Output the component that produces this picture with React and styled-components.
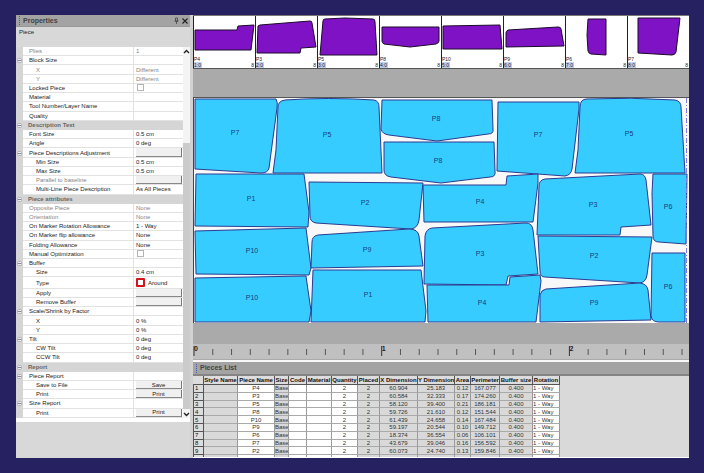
import React from "react";
import styled, { createGlobalStyle, css } from "styled-components";

const Global = createGlobalStyle`
  * { box-sizing: border-box; }
  body { margin: 0; background: #262262; font-family: "Liberation Sans", Arial, sans-serif; font-size: 6px; color: #222; }
  button, input { font: inherit; margin: 0; padding: 0; }
`;

const Frame = styled.main`
  display: grid;
  grid-template-columns: 177fr 496fr;
  grid-template-rows: minmax(0, 1fr);
  height: 100vh;
  padding: 15px 15px 15px 16px;
`;

/* Properties panel */
const Sidebar = styled.aside`
  display: flex;
  flex-direction: column;
  min-width: 0;
  background: #d8d8d8;
  border-right: 3px solid #d2d2d2;
`;
const TitleBar = styled.header`
  display: flex;
  align-items: center;
  height: ${(p) => (p.$ruled ? 14 : 12)}px;
  padding: 0 2px 0 3px;
  gap: 3px;
  background: #a3a3a3;
  color: #444;
  border-bottom: ${(p) => (p.$ruled ? "2px solid #858585" : "1px solid #989898")};
`;
const Grip = styled.span`
  height: 9px;
  border-left: 1px dotted #3d5fae;
`;
const Title = styled.h2`
  flex: 1;
  margin: 0;
  font-size: 7px;
  line-height: 8px;
  font-weight: bold;
`;
const IconButton = styled.button`
  display: flex;
  border: 0;
  background: none;
  color: #222;
`;
const Subject = styled.p`
  height: 20px;
  margin: 0;
  padding: 1px 3px;
  font-size: 6px;
  line-height: 8px;
`;
const GridArea = styled.div`
  display: flex;
  flex: 1;
  min-height: 0;
  padding-bottom: 4px;
  background: #fff;
`;
const PropertyList = styled.div`
  display: flex;
  flex: 1;
  flex-direction: column;
  min-width: 0;
`;
const PropertyRow = styled.div`
  display: grid;
  grid-template-columns: 7px 111fr 49fr;
  flex: ${(p) => (p.$tall ? 11 : 9)} 1 0;
  min-height: 0;
  align-items: stretch;
  line-height: 8px;
  color: ${(p) => (p.$dim ? "#858585" : "#222")};
  ${(p) => p.$section && css`
    background: #d5d5d5;
    color: #666;
    font-weight: bold;
  `}
`;
const Gutter = styled.div`
  display: flex;
  align-items: center;
  justify-content: center;
  background: #d5d5d5;
`;
const Toggle = styled.button`
  display: flex;
  border: 0;
  background: none;
`;
const Name = styled.label`
  display: flex;
  align-items: center;
  min-width: 0;
  padding-left: ${(p) => (p.$level === 2 ? 13 : p.$level === 1 ? 6 : 5)}px;
  white-space: nowrap;
  border-bottom: 1px solid ${(p) => (p.$level ? "#e2e2e2" : "#d5d5d5")};
  ${(p) => p.$level > 0 && "border-right: 1px solid #e2e2e2;"}
`;
const Value = styled.div`
  display: flex;
  align-items: center;
  gap: 3px;
  min-width: 0;
  padding-left: 2px;
  white-space: nowrap;
  border-bottom: 1px solid ${(p) => (p.$section ? "#d5d5d5" : "#e2e2e2")};
`;
const PushButton = styled.button`
  flex: 1;
  align-self: stretch;
  margin-right: 1px;
  border: 0;
  border-right: 1px solid #777;
  border-bottom: 1px solid #888;
  background: #f0f0f0;
  color: #222;
  line-height: 6px;
`;
const Check = styled.input`
  appearance: none;
  width: 7px;
  height: 7px;
  margin-left: 1px;
  border: 1px solid #b5b5b5;
  background: #fff;
`;
const Swatch = styled.span`
  width: 9px;
  height: 9px;
  border: 2px solid #d3141b;
  border-radius: 1px;
  background: #fff;
`;
const Scrollbar = styled.div`
  display: flex;
  flex-direction: column;
  align-items: center;
  width: 7px;
  background: #f4f4f4;
`;
const Thumb = styled.div`
  flex: 270;
  width: 100%;
  background: #cbcbcb;
`;
const Track = styled.div`
  flex: 88;
`;
const Footer = styled.div`
  height: 36px;
  background: #d8d8d8;
`;

/* Workspace */
const Workspace = styled.section`
  display: flex;
  flex-direction: column;
  min-width: 0;
  min-height: 0;
  background: #aaa;
`;
const Strip = styled.div`
  display: grid;
  grid-template-columns: repeat(8, 1fr);
  background: #fff;
  border-top: 1px solid #777;
  border-bottom: 1px solid #555;
`;
const Thumbnail = styled.figure`
  display: flex;
  flex-direction: column;
  min-width: 0;
  margin: 0;
  border-left: 1px solid #222;
  font-size: 5px;
  line-height: 6px;
  color: #222;
  svg { display: block; width: 100%; }
`;
const Counts = styled.figcaption`
  display: flex;
  flex-wrap: wrap;
  justify-content: space-between;
`;
const PieceTag = styled.span`
  width: 100%;
`;
const Count = styled.span`
  padding-right: 1px;
  background: ${(p) => (p.$marked ? "#c3cfee" : "#fff")};
`;
const Marker = styled.div`
  margin: 28px 0 21px;
  background: #f8f8f8;
  svg { display: block; width: 100%; }
`;
const Ruler = styled.div`
  background: #c0c0c0;
  border-bottom: 1px solid #aaa;
  svg { display: block; width: 100%; }
`;
const Divider = styled.div`
  height: 2px;
  background: #f8f8f8;
`;
const ListArea = styled.div`
  flex: 1;
  min-height: 0;
  overflow: hidden;
  background: #d9d9d9;
  border-bottom: 1px solid #fff;
`;
const Table = styled.table`
  width: 74%;
  height: 87px;
  table-layout: fixed;
  border-collapse: separate;
  border-spacing: 0;
  font-size: 6px;
  line-height: 6px;
`;
const Head = styled.th`
  height: 9px;
  padding: 0;
  overflow: hidden;
  white-space: nowrap;
  background: #ddd;
  color: #111;
  border-right: 1px solid #555;
  border-bottom: 1px solid #555;
`;
const Cell = styled.td`
  padding: 0;
  overflow: hidden;
  white-space: nowrap;
  text-align: ${(p) => (p.$left ? "left" : "center")};
  background: ${(p) => (p.$open ? "#fff" : "#d9d9d9")};
  color: #333;
  border-right: 1px solid #999;
  border-bottom: 1px solid #aaa;
`;
const RowHead = styled(Head)`
  height: auto;
  padding-left: 1px;
  text-align: left;
  font-weight: normal;
  border-left: 1px solid #555;
`;

const S = (name) => ({ name, level: 0, toggle: true });
const G = (name, value = "") => ({ name, value, level: 1, toggle: true });
const R = (name, value = "", extra) => ({ name, value, level: 1, ...extra });
const C = (name, value = "", extra) => ({ name, value, level: 2, ...extra });
const dim = { dim: true };
const button = { kind: "button" };
const check = { kind: "check" };

const properties = [
  R("Plies", "1", dim),
  G("Block Size"),
  C("X", "Different", dim),
  C("Y", "Different", dim),
  R("Locked Piece", "", check),
  R("Material"),
  R("Tool Number/Layer Name"),
  R("Quality"),
  S("Description Text"),
  R("Font Size", "0.5 cm"),
  R("Angle", "0 deg"),
  { ...G("Piece Descriptions Adjustment"), kind: "button" },
  C("Min Size", "0.5 cm"),
  C("Max Size", "0.5 cm"),
  C("Parallel to baseline", "", { dim: true, kind: "button" }),
  C("Multi-Line Piece Description", "As All Pieces"),
  S("Piece attributes"),
  R("Opposite Piece", "None", dim),
  R("Orientation", "None", dim),
  R("On Marker Rotation Allowance", "1 - Way"),
  R("On Marker flip allowance", "None"),
  R("Folding Allowance", "None"),
  R("Manual Optimization", "", check),
  G("Buffer"),
  C("Size", "0.4 cm"),
  C("Type", "Around", { kind: "swatch" }),
  C("Apply", "", button),
  C("Remove Buffer", "", button),
  G("Scale/Shrink by Factor"),
  C("X", "0 %"),
  C("Y", "0 %"),
  G("Tilt", "0 deg"),
  C("CW Tilt", "0 deg"),
  C("CCW Tilt", "0 deg"),
  S("Report"),
  G("Piece Report"),
  C("Save to File", "Save", button),
  C("Print", "Print", button),
  G("Size Report"),
  C("Print", "Print", button),
];

const thumbnails = [
  ["P4", "M1,14H43L44,10L60,9L57,34H1Z"],
  ["P3", "M2,10L4,9L54,5Q56,5 56,7L60,31L45,32L44,37H1Z"],
  ["P5", "M5,5Q5,3 7,3L27,2L55,3Q57,3 57,6L59,39L2,39Z"],
  ["P8", "M2,11H59V25Q59,27 56,28L30,31L4,28Q2,27 2,25Z"],
  ["P10", "M1,10L58,9L60,33H1Z"],
  ["P9", "M2,17Q2,15 4,14L54,11Q57,11 57,13L60,30L2,31Z"],
  ["P6", "M22,3H40V39L25,38Q23,38 22,35L21,19Z"],
  ["P7", "M10,2H52L48,36Q47,39 44,39L10,37Z"],
];

const pieces = [
  ["P7", 235, 133, "M195,99H276Q278,102 277,108L269,168Q268,173 261,173L195,169Z"],
  ["P5", 327, 135, "M273,173L276,150L278,107Q278,101 285,100Q327,97 374,100Q379,101 379,107L382,173Z"],
  ["P8", 436, 119, "M382,100H492L493,129Q494,134 488,134L437,141L389,135Q382,134 381,129Z"],
  ["P8", 438, 161, "M384,142H494L495,171Q496,177 490,177L441,183L391,177Q384,176 384,170Z"],
  ["P7", 538, 135, "M498,102H579V109L572,169Q571,175 565,176L497,171Z"],
  ["P5", 629, 134, "M575,173L578,150L580,107Q580,99 587,99Q630,97 675,100Q681,101 681,107L685,173Z"],
  ["P1", 251, 199, "M196,174H304L309,212L308,227L195,226Z"],
  ["P2", 365, 203, "M309,182L423,183L419,220Q418,228 411,229L316,223Q310,222 310,216Z"],
  ["P4", 480, 202, "M423,185H506L507,176L538,174V183L533,222H424Z"],
  ["P3", 593, 205, "M537,235L539,186Q539,180 545,179L640,174Q645,174 646,180L651,225L621,227L620,235Z"],
  ["P6", 668, 207, "M653,174H687L686,244L659,242Q653,242 653,236L652,193Z"],
  ["P10", 252, 251, "M195,231L306,228L311,268L309,275L196,274Z"],
  ["P9", 367, 250, "M311,268L312,242Q312,236 318,235L409,229Q418,229 419,236L423,266Z"],
  ["P3", 480, 254, "M424,284L425,236Q426,229 432,228L526,223Q532,223 533,230L538,274L508,276L506,285Z"],
  ["P2", 594, 256, "M538,236L652,237L647,275Q646,282 640,283L545,277Q540,277 540,271Z"],
  ["P6", 668, 287, "M652,253H685V322H659Q652,322 651,316Z"],
  ["P10", 252, 298, "M195,278L306,276L311,311L309,322H195Z"],
  ["P1", 368, 295, "M313,270H421L426,311L425,322H311Z"],
  ["P4", 482, 303, "M427,285H509L510,277L540,275L541,281L536,322H428Z"],
  ["P9", 594, 303, "M540,322V295Q541,290 546,289L640,283Q647,284 648,290L651,320Z"],
];

const columns = [
  ["", 11], ["Style Name", 34], ["Piece Name", 37], ["Size", 14], ["Code", 18],
  ["Material", 25], ["Quantity", 26], ["Placed", 22], ["X Dimension", 38],
  ["Y Dimension", 37], ["Area", 16], ["Perimeter", 29], ["Buffer size", 33], ["Rotation", 27],
];
const rows = [
  ["P4", "60.904", "25.183", "0.12", "167.077"],
  ["P3", "60.584", "32.333", "0.17", "174.260"],
  ["P5", "58.120", "39.400", "0.21", "186.181"],
  ["P8", "59.726", "21.610", "0.12", "151.544"],
  ["P10", "61.439", "24.658", "0.14", "167.484"],
  ["P9", "59.197", "20.544", "0.10", "149.712"],
  ["P6", "18.374", "36.554", "0.06", "106.101"],
  ["P7", "43.679", "39.046", "0.16", "156.592"],
  ["P2", "60.073", "24.740", "0.13", "159.846"],
  ["P1", "60.060", "27.042", "0.16", "173.507"],
];
const openColumns = [1, 3, 4, 5, 12];

function Arrow({ up }) {
  return (
    <svg width="7" height="9" viewBox="0 0 7 9">
      <path d={up ? "M1 6L3.5 3.5L6 6" : "M1 4L3.5 6.5L6 4"} fill="none" stroke="#222" strokeWidth="1.4" />
    </svg>
  );
}

function Control({ id, item }) {
  if (item.kind === "button") return <PushButton id={id} aria-label={item.name}>{item.value}</PushButton>;
  if (item.kind === "check") return <Check id={id} type="checkbox" />;
  if (item.kind === "swatch") return <><Swatch />{item.value}</>;
  return item.value;
}

function Property({ item, index }) {
  const id = `property-${index}`;
  const field = item.kind === "button" || item.kind === "check";
  return (
    <PropertyRow $section={item.level === 0} $dim={item.dim} $tall={item.kind === "swatch"}>
      <Gutter>
        {item.toggle && (
          <Toggle aria-label={`Collapse ${item.name}`}>
            <svg width="5" height="5" viewBox="0 0 5 5">
              <rect x=".5" y=".5" width="4" height="4" rx="1" fill="#eee" stroke="#b0b0b8" />
              <path d="M1 2.5H4" stroke="#889" />
            </svg>
          </Toggle>
        )}
      </Gutter>
      <Name as={field ? "label" : "span"} htmlFor={field ? id : undefined} $level={item.level}>{item.name}</Name>
      <Value $section={item.level === 0}><Control id={id} item={item} /></Value>
    </PropertyRow>
  );
}

function RulerScale() {
  const ticks = Array.from({ length: 27 }, (_, i) => i);
  return (
    <svg viewBox="193 344 496 15">
      {ticks.map((i) => {
        const x = 194 + i * 18.77;
        const major = i % 10 === 0;
        return (
          <g key={i}>
            <path d={major ? `M${x} 346V356` : `M${x} 349V355`} stroke={major ? "#333" : "#555"} />
            {major && <text x={x} y="351" fontSize="7" fontWeight="bold" fill="#222">{i / 10}</text>}
          </g>
        );
      })}
    </svg>
  );
}

export default function App() {
  return (
    <>
      <Global />
      <Frame>
        <Sidebar>
          <TitleBar>
            <Grip />
            <Title>Properties</Title>
            <IconButton aria-label="Pin">
              <svg width="5" height="7" viewBox="0 0 5 7">
                <path d="M1.5 1H3.5V4H1.5ZM.5 4.2H4.5M2.5 4V7" fill="none" stroke="#444" strokeWidth=".8" />
              </svg>
            </IconButton>
            <IconButton aria-label="Close">
              <svg width="6" height="6" viewBox="0 0 6 6">
                <path d="M.5 .5L5.5 5.5M5.5 .5L.5 5.5" stroke="#222" strokeWidth="1.1" />
              </svg>
            </IconButton>
          </TitleBar>
          <Subject>Piece</Subject>
          <GridArea>
            <PropertyList>
              {properties.map((item, i) => <Property key={i} item={item} index={i} />)}
            </PropertyList>
            <Scrollbar>
              <Arrow up />
              <Track />
              <Thumb />
              <Arrow />
            </Scrollbar>
          </GridArea>
          <Footer />
        </Sidebar>

        <Workspace>
          <Strip>
            {thumbnails.map(([name, d], i) => (
              <Thumbnail key={name}>
                <svg viewBox="0 0 61 40">
                  <path d={d} fill="#8012c6" stroke="#1b0a2c" />
                </svg>
                <Counts>
                  <PieceTag>{name}</PieceTag>
                  <Count $marked>{i + 1}:0</Count>
                  <Count>8</Count>
                </Counts>
              </Thumbnail>
            ))}
          </Strip>
          <Marker>
            <svg viewBox="193 97 496 226">
              <path d="M193 97.5H689" stroke="#555" />
              {pieces.map(([name, x, y, d], i) => (
                <g key={i}>
                  <path d={d} fill="#36ccff" stroke="#2b3b91" strokeLinejoin="round" />
                  <text x={x} y={y + 2} fontSize="7" textAnchor="middle" fill="#173f7d">{name}</text>
                </g>
              ))}
              <path d="M193.5 97V323" stroke="#445" />
              <path d="M686.5 98V323" stroke="#7a7ae8" strokeDasharray="5 2 1 2" />
            </svg>
          </Marker>
          <Ruler><RulerScale /></Ruler>
          <Divider />
          <TitleBar $ruled>
            <Grip />
            <Title>Pieces List</Title>
          </TitleBar>
          <ListArea>
            <Table>
              <colgroup>
                {columns.map(([name, w]) => <col key={name} width={w} />)}
              </colgroup>
              <thead>
                <tr>{columns.map(([name]) => <Head key={name} scope="col">{name}</Head>)}</tr>
              </thead>
              <tbody>
                {rows.map(([piece, x, y, area, perimeter], r) => {
                  const cells = ["", piece, "Base", "", "", "2", "2", x, y, area, perimeter, "0.400", "1 - Way"];
                  return (
                    <tr key={piece}>
                      <RowHead scope="row">{r + 1}</RowHead>
                      {cells.map((text, c) => (
                        <Cell key={c} $open={openColumns.includes(c)} $left={c === 12}>{text}</Cell>
                      ))}
                    </tr>
                  );
                })}
              </tbody>
            </Table>
          </ListArea>
        </Workspace>
      </Frame>
    </>
  );
}
